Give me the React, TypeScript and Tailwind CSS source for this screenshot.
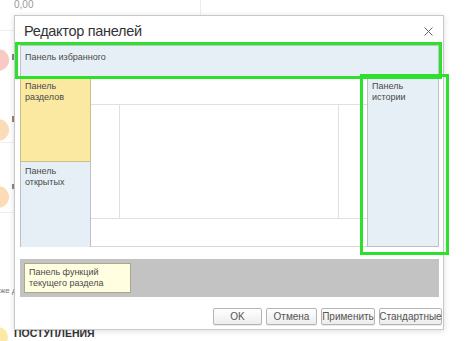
import React from "react";

const font = { fontFamily: '"Liberation Sans", Arial, sans-serif' };

function Btn({ label, w }: { label: string; w: string }) {
  return (
    <div
      className={`${w} h-[17px] flex items-center justify-center rounded-[2px] border border-[#b4b4b4] bg-gradient-to-b from-white to-[#ededed] text-[10px] text-[#555] shadow-[0_1px_0_rgba(0,0,0,0.08)]`}
    >
      {label}
    </div>
  );
}

export default function App() {
  return (
    <div className="relative w-[474px] h-[341px] overflow-hidden bg-white" style={font}>
      {/* background page */}
      <div className="absolute left-[14px] top-0 text-[10px] leading-[10px] text-[#999]">0,00</div>
      <div className="absolute left-[200px] top-0 w-px h-[15px] bg-[#ececec]" />
      <div className="absolute left-[0px] top-[30px] w-[14px] h-px bg-[#eeeeee]" />
      <div className="absolute left-[-13px] top-[49px] w-[22px] h-[22px] rounded-full bg-[#f9c9c4]" />
      <div className="absolute left-[12px] top-[54px] w-[2px] h-[6px] bg-[#888]" />
      <div className="absolute left-[-13px] top-[119px] w-[22px] h-[22px] rounded-full bg-[#fbdcb6]" />
      <div className="absolute left-[12px] top-[116px] w-[2px] h-[6px] bg-[#a08070]" />
      <div className="absolute left-[-13px] top-[186px] w-[22px] h-[22px] rounded-full bg-[#fbdcb6]" />
      <div className="absolute left-[12px] top-[184px] w-[2px] h-[5px] bg-[#888]" />
      <div className="absolute left-[0px] top-[142px] w-[14px] h-px bg-[#eeeeee]" />
      <div className="absolute left-[0px] top-[212px] w-[14px] h-px bg-[#eeeeee]" />
      <div className="absolute left-0 top-[286px] text-[8px] leading-[10px] text-[#777]">же д</div>
      <div className="absolute left-[-12px] top-[327px] w-[20px] h-[20px] rounded-full bg-[#fde9a6]" />
      <div className="absolute left-[14px] top-[328px] text-[10.5px] leading-[11px] font-bold text-[#333]">ПОСТУПЛЕНИЯ</div>

      {/* dialog */}
      <div className="absolute left-[14px] top-[15px] w-[430px] h-[315px] flex flex-col bg-white border border-[#c8c8c8] shadow-[0_1px_6px_rgba(0,0,0,0.14)]">
        <div className="h-[29px] flex items-center justify-between pl-[9px] pr-[8px]">
          <span className="text-[14.5px] text-[#333] tracking-[-0.3px] pt-[2px]">Редактор панелей</span>
          <svg width="9" height="9" viewBox="0 0 9 9" className="mt-[2px] mr-[2px]">
            <path d="M0.5 0.5 L8.5 8.5 M8.5 0.5 L0.5 8.5" stroke="#666" strokeWidth="1" />
          </svg>
        </div>

        <div className="pl-[5px] pr-[4px] flex flex-col text-[9px] leading-[11px] text-[#4a4a4a]">
          {/* favorites */}
          <div className="h-[32px] bg-[#e5eff5] border border-[#bcc6cc] pl-[4px] pt-[6px]">Панель избранного</div>

          {/* middle */}
          <div className="h-[170px] flex">
            <div className="w-[71px] flex flex-col">
              <div className="h-[85px] bg-[#fbe9a2] border-l border-r border-b border-[#cbbf8c] pl-[4px] pt-[4px]">
                Панель
                <br />
                разделов
              </div>
              <div className="h-[85px] bg-[#e5eff5] border-l border-r border-[#b9c1c8] pl-[4px] pt-[4px]">
                Панель
                <br />
                открытых
              </div>
            </div>
            <div className="w-[276px] flex flex-col bg-white border-b border-[#d8d8d8]">
              <div className="h-[27px]" />
              <div className="h-[115px] flex border-t border-b border-[#e0e0e0]">
                <div className="w-[28px]" />
                <div className="w-[220px] border-l border-r border-[#e0e0e0]" />
                <div className="w-[28px]" />
              </div>
              <div className="flex-1" />
            </div>
            <div className="w-[72px] bg-[#e5eff5] border-l border-r border-b border-[#b9c1c8] pl-[4px] pt-[4px]">
              Панель
              <br />
              истории
            </div>
          </div>

          {/* function panel */}
          <div className="mt-[12px] h-[38px] bg-[#c3c3c3] p-[4px]">
            <div className="w-[107px] h-[30px] bg-[#fffee0] border border-[#a9a98a] pl-[4px] pt-[3px]">
              Панель функций
              <br />
              текущего раздела
            </div>
          </div>
        </div>

        <div className="mt-[11px] flex justify-end gap-[4px] pr-[1px]">
          <Btn label="OK" w="w-[49px]" />
          <Btn label="Отмена" w="w-[51px]" />
          <Btn label="Применить" w="w-[54px]" />
          <Btn label="Стандартные" w="w-[63px]" />
        </div>
      </div>

      {/* green annotation boxes */}
      <div className="absolute left-[15px] top-[42px] w-[427px] h-[37px] border-[3px] border-[#2ee02e] pointer-events-none" />
      <div className="absolute left-[360px] top-[74px] w-[89px] h-[181px] border-[3px] border-[#2ee02e] pointer-events-none" />
    </div>
  );
}
